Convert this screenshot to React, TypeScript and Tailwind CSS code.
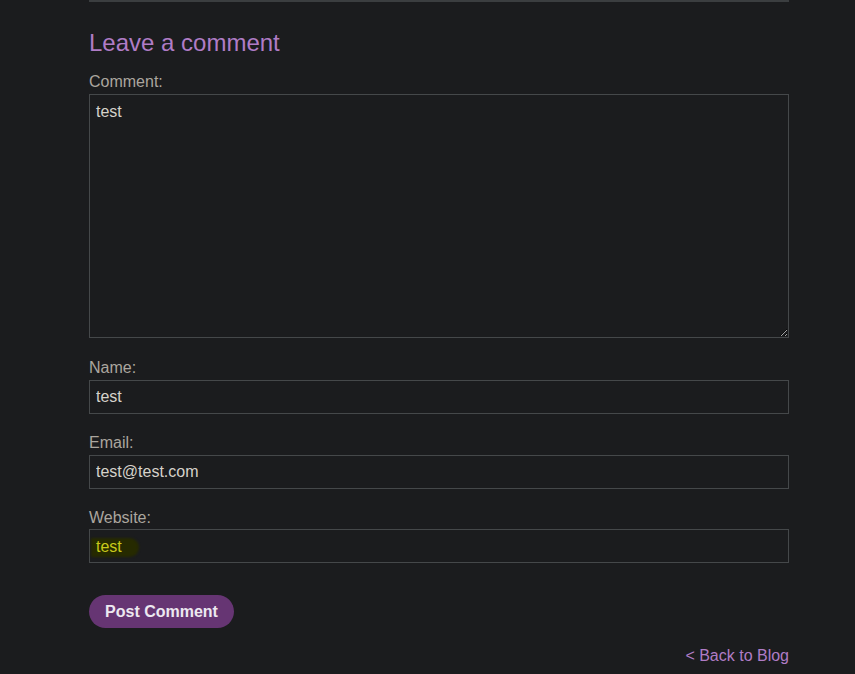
import React from "react";

export default function App() {
  const font = { fontFamily: '"Liberation Sans", Arial, sans-serif' };
  return (
    <div className="min-h-[674px] w-full bg-[#1b1c1e]" style={font}>
      <div className="mx-auto w-[700px] ml-[89px]">
        <div className="h-[2px] bg-[#3b3e40]" />
        <h2 className="mt-[26px] text-[24px] leading-[29px] text-[#b07cc6]">Leave a comment</h2>
        <form className="mt-[15px] flex flex-col" onSubmit={(e) => e.preventDefault()}>
          <label className="block text-[16px] leading-[20px] text-[#aba69e]">Comment:</label>
          <textarea
            defaultValue="test"
            className="mt-[2px] block h-[244px] w-[700px] border border-[#45484a] bg-[#1b1c1e] px-[6px] pt-[8px] text-[16px] leading-[18px] text-[#d6d2ca] outline-none"
          />
          <label className="mt-[20px] block text-[16px] leading-[20px] text-[#aba69e]">Name:</label>
          <input
            defaultValue="test"
            className="mt-[2px] block h-[34px] w-[700px] border border-[#45484a] bg-[#1b1c1e] px-[6px] text-[16px] text-[#d6d2ca] outline-none"
          />
          <label className="mt-[19px] block text-[16px] leading-[20px] text-[#aba69e]">Email:</label>
          <input
            defaultValue="test@test.com"
            className="mt-[2px] block h-[34px] w-[700px] border border-[#45484a] bg-[#1b1c1e] px-[6px] text-[16px] text-[#d6d2ca] outline-none"
          />
          <label className="mt-[19px] block text-[16px] leading-[20px] text-[#aba69e]">Website:</label>
          <div className="relative mt-[1px] h-[34px] w-[700px] border border-[#45484a] bg-[#1b1c1e]">
            <div className="absolute left-[1px] top-[8px] h-[19px] w-[48px] rounded-r-full rounded-l-[6px] bg-[#262a00] blur-[1px]" />
            <input
              defaultValue="test"
              className="relative block h-full w-full bg-transparent px-[6px] pt-[1px] text-[16px] text-[#c9c91a] outline-none"
            />
          </div>
          <button
            type="submit"
            className="mt-[32px] h-[33px] w-[145px] rounded-full bg-[#663573] text-[16px] font-bold text-[#ece8f0]"
          >
            Post Comment
          </button>
        </form>
        <div className="mt-[18px] text-right text-[16px] leading-[20px] text-[#b07cc6]">&lt; Back to Blog</div>
      </div>
    </div>
  );
}
